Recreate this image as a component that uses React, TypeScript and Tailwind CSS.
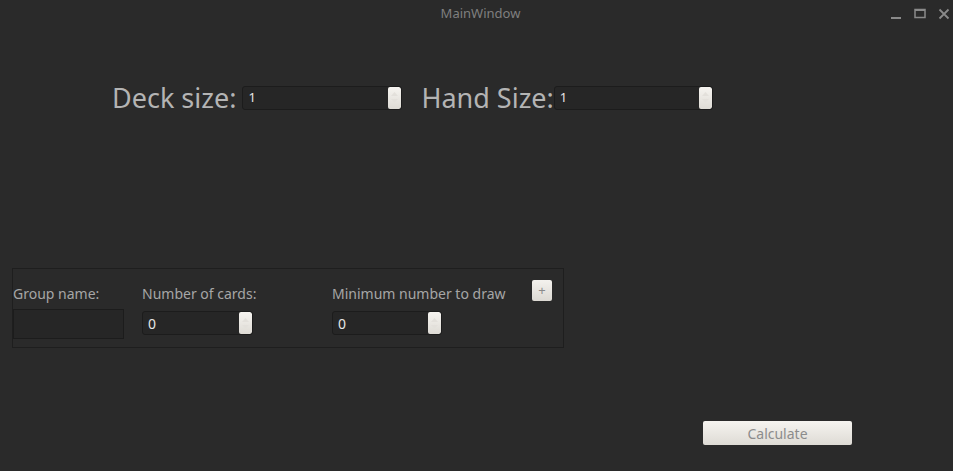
import React from "react";

const SpinBox = ({ value, w, h, text }: { value: string; w: string; h: string; text: string }) => {
  return (
    <div className={`flex ${w} ${h} rounded-[3px] border border-[#1c1c1c] bg-[#262626] overflow-hidden`}>
      <div className={`flex-1 flex items-center pl-[5px] text-[#e6e6e6] ${text}`}>{value}</div>
      <div className="flex w-[13px] flex-col items-center justify-center gap-[3px] rounded-[2px] bg-gradient-to-b from-[#f6f4f0] to-[#dedbd5]">
        <svg width="7" height="4" viewBox="0 0 7 4">
          <path d="M0 4 L3.5 0 L7 4 Z" fill="#e3e0db" />
        </svg>
        <svg width="7" height="4" viewBox="0 0 7 4">
          <path d="M0 0 L3.5 4 L7 0 Z" fill="#e3e0db" />
        </svg>
      </div>
    </div>
  );
};

const App = () => {
  return (
    <div
      className="flex h-[471px] w-[953px] flex-col bg-[#2a2a2a]"
      style={{ fontFamily: '"Noto Sans", "Open Sans", sans-serif' }}
    >
      {/* title bar */}
      <div className="grid h-[27px] grid-cols-[1fr_auto_1fr] items-center">
        <div />
        <div className="pl-[8px] text-[13px] text-[#7f7f7f]">MainWindow</div>
        <div className="flex items-center justify-end gap-[12px] pr-[3px] text-[#8a8a8a]">
          <svg width="12" height="12" viewBox="0 0 12 12">
            <rect x="1" y="9" width="10" height="2" fill="#8a8a8a" />
          </svg>
          <svg width="12" height="12" viewBox="0 0 12 12">
            <rect x="1" y="1.5" width="10" height="8" fill="none" stroke="#8a8a8a" strokeWidth="1.5" />
            <rect x="1" y="1" width="10" height="2" fill="#8a8a8a" />
          </svg>
          <svg width="12" height="12" viewBox="0 0 12 12">
            <path d="M1.5 1.5 L10.5 10.5 M10.5 1.5 L1.5 10.5" stroke="#8a8a8a" strokeWidth="1.8" />
          </svg>
        </div>
      </div>

      {/* deck / hand row */}
      <div className="mt-[57px] flex items-center pl-[112px]">
        <span className="text-[27px] leading-none text-[#b4b4b4]">Deck size:</span>
        <div className="ml-[6px]">
          <SpinBox value="1" w="w-[160px]" h="h-[24px]" text="text-[13px]" />
        </div>
        <span className="ml-[19px] text-[27px] leading-none text-[#b4b4b4]">Hand Size:</span>
        <div>
          <SpinBox value="1" w="w-[159px]" h="h-[24px]" text="text-[13px]" />
        </div>
      </div>

      {/* group box */}
      <div className="ml-[12px] mt-[157px] flex h-[80px] w-[552px] border border-[#1e1e1e] pt-[16px]">
        <div className="flex w-[111px] flex-col">
          <span className="text-[14px] leading-[18px] text-[#a6a6a6]">Group name:</span>
          <div className="mt-[6px] h-[30px] w-[111px] border border-[#1c1c1c] bg-[#262626]" />
        </div>
        <div className="ml-[18px] flex w-[190px] flex-col">
          <span className="text-[14px] leading-[18px] text-[#a6a6a6]">Number of cards:</span>
          <div className="mt-[8px]">
            <SpinBox value="0" w="w-[111px]" h="h-[24px]" text="text-[14px]" />
          </div>
        </div>
        <div className="flex w-[200px] flex-col">
          <span className="text-[14px] leading-[18px] text-[#a6a6a6]">Minimum number to draw</span>
          <div className="mt-[8px]">
            <SpinBox value="0" w="w-[110px]" h="h-[24px]" text="text-[14px]" />
          </div>
        </div>
        <div className="-mt-[5px]">
          <button className="flex h-[21px] w-[20px] items-center justify-center rounded-[2px] bg-gradient-to-b from-[#f4f2ee] to-[#dcd9d3] text-[13px] leading-none text-[#8a8a8a]">
            +
          </button>
        </div>
      </div>

      {/* calculate */}
      <div className="mt-[73px] flex pl-[703px]">
        <button className="h-[24px] w-[149px] rounded-[2px] bg-gradient-to-b from-[#f6f4f0] to-[#dedbd5] text-[14px] text-[#8c8c8c]">
          Calculate
        </button>
      </div>
    </div>
  );
};

export default App;
